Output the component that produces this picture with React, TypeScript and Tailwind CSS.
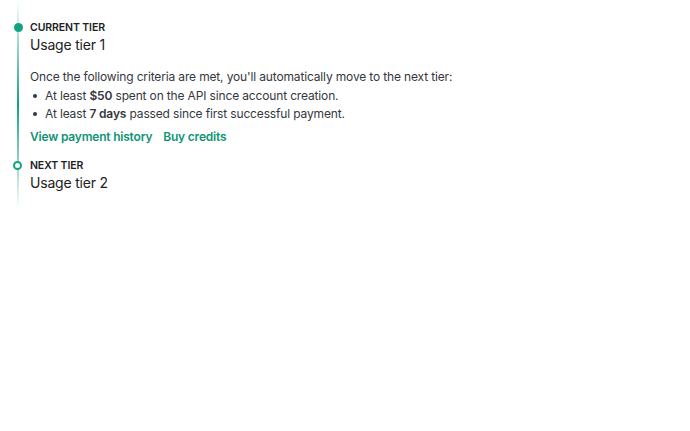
export default function App() {
  return (
    <div className="w-[690px] h-[431px] bg-white" style={{ fontFamily: 'Inter, "Noto Sans", sans-serif' }}>
      <div className="relative ml-[17px] pl-[13px] pt-[21px] pb-[16px] w-fit">
        {/* timeline line */}
        <div className="absolute left-0 top-0 bottom-0 w-[2px] bg-gradient-to-b from-[#10a37f]/0 via-[#10a37f] to-[#10a37f]/0" />
        <div className="absolute left-[-3.5px] top-[23px] w-[9px] h-[9px] rounded-full bg-[#10a37f]" />
        <div className="text-[10.5px] leading-[14px] font-semibold tracking-[-0.1px] text-[#202123] uppercase">Current tier</div>
        <div className="text-[14px] leading-[20px] tracking-[-0.2px] text-[#202123]">Usage tier 1</div>

        <div className="mt-[13px] text-[12px] leading-[18.5px] tracking-[-0.15px] text-[#353740]">
          <p>Once the following criteria are met, you'll automatically move to the next tier:</p>
          <ul className="pl-[3px]">
            <li className="flex items-center gap-[8px]">
              <span className="w-[4px] h-[4px] rounded-full bg-[#353740]" />
              <span>At least <b className="font-semibold">$50</b> spent on the API since account creation.</span>
            </li>
            <li className="flex items-center gap-[8px]">
              <span className="w-[4px] h-[4px] rounded-full bg-[#353740]" />
              <span>At least <b className="font-semibold">7 days</b> passed since first successful payment.</span>
            </li>
          </ul>
        </div>
        <div className="mt-[4px] flex gap-[11px] text-[12px] leading-[18px] font-semibold tracking-[-0.2px] text-[#0f9474]">
          <a>View payment history</a>
          <a>Buy credits</a>
        </div>

        <div className="relative mt-[13px]">
          <div className="absolute left-[-17.5px] top-[2.5px] w-[9px] h-[9px] rounded-full border-2 border-[#10a37f] bg-white" />
          <div className="text-[10.5px] leading-[14px] font-semibold tracking-[-0.1px] text-[#202123] uppercase">Next tier</div>
          <div className="text-[14px] leading-[20px] tracking-[-0.2px] text-[#202123]">Usage tier 2</div>
        </div>
      </div>
    </div>
  );
}
